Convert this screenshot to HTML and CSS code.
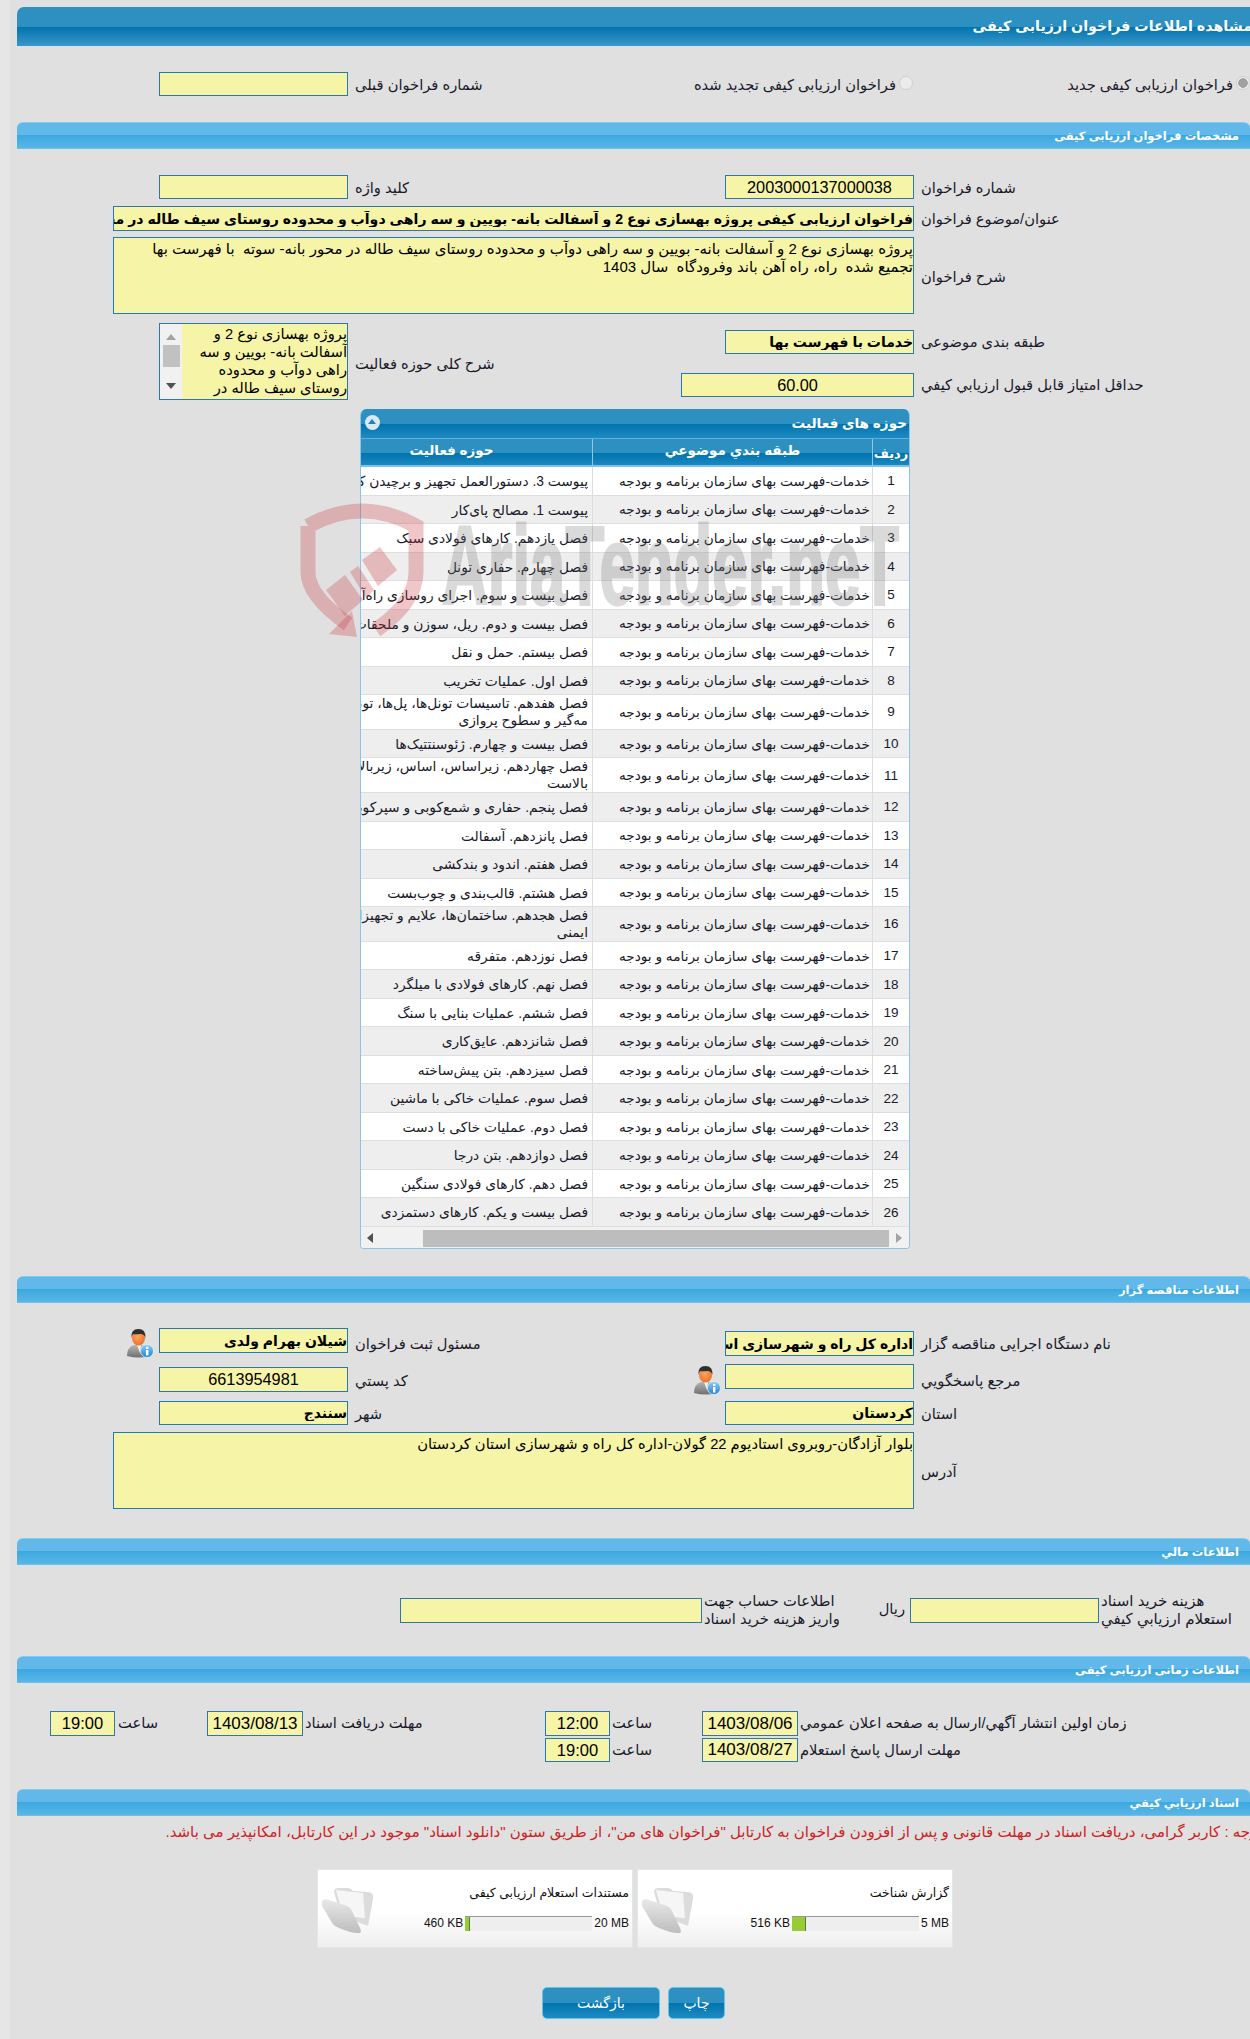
FILE: index.html
```html
<!DOCTYPE html>
<html lang="fa" dir="rtl">
<head>
<meta charset="utf-8">
<title>مشاهده اطلاعات فراخوان ارزیابی کیفی</title>
<link rel="stylesheet" href="styles.css">
</head>
<body>
<svg class="defs" width="0" height="0" aria-hidden="true">
  <defs>
    <linearGradient id="suit" x1="0" y1="0" x2="0" y2="1"><stop offset="0" stop-color="#b5b5b5"/><stop offset="1" stop-color="#6f6f6f"/></linearGradient>
    <radialGradient id="face" cx=".45" cy=".4" r=".7"><stop offset="0" stop-color="#ffa564"/><stop offset="1" stop-color="#e9691f"/></radialGradient>
    <linearGradient id="info" x1="0" y1="0" x2="0" y2="1"><stop offset="0" stop-color="#8fd0f5"/><stop offset="1" stop-color="#1f80cf"/></linearGradient>
    <linearGradient id="fold" x1="0" y1="0" x2="0" y2="1"><stop offset="0" stop-color="#e8e8e8"/><stop offset="1" stop-color="#bdbdbd"/></linearGradient>
    <symbol id="person" viewBox="0 0 28 30">
      <path d="M1 28 Q1 19 8 17 L18 17 Q24 19 24 28 Q13 31 1 28Z" fill="url(#suit)"/>
      <path d="M11 17 L15 17 L14 25Z" fill="#f2f2f2"/>
      <ellipse cx="12.500" cy="10" rx="6.500" ry="7.500" fill="url(#face)"/>
      <path d="M5.500 10 Q4.500 1 12.500 1 Q20 1 19.500 10 Q18 5.500 14 6 Q9 6.500 7 6 Q6 8 5.500 10Z" fill="#2f2f2f"/>
      <circle cx="21" cy="23" r="6.500" fill="url(#info)" stroke="#dff1fb" stroke-width=".8"/>
      <rect x="20" y="22" width="2.400" height="5.500" fill="#fff"/>
      <rect x="20" y="18.800" width="2.400" height="2.200" fill="#fff"/>
    </symbol>
    <symbol id="folder" viewBox="0 0 54 48">
      <path d="M13 6 Q13 2 18 2 L27 2 Q30 2 32 5 L47 6 Q53 6 52 13 L47 40 L20 30Z" fill="#dcdcdc"/>
      <path d="M15 4 L42 7 L44 32 L22 30Z" fill="#f6f6f6"/>
      <path d="M1 15 Q3 12 8 14 L26 20 Q29 21 31 25 L39 42 Q42 48 36 47 Q30 47 18 42 Q12 40 10 35 L1 20Z" fill="url(#fold)"/>
    </symbol>
  </defs>
</svg>

<div class="page">
  <h1 class="main-bar">مشاهده اطلاعات فراخوان ارزیابی کیفی</h1>

  <div class="form row-radio">
    <label class="radio-label first-radio"><input type="radio" name="kind" checked disabled><span>فراخوان ارزیابی کیفی جدید</span></label>
    <label class="radio-label second-radio"><input type="radio" name="kind" disabled><span>فراخوان ارزیابی کیفی تجدید شده</span></label>
    <span class="lbl col3">شماره فراخوان قبلی</span>
    <input class="fld col4" readonly value="">
  </div>

  <h2 class="sub-bar sec-spec">مشخصات فراخوان ارزیابی کیفی</h2>

  <div class="form row-a">
    <span class="lbl">شماره فراخوان</span>
    <input class="fld col2 center" readonly value="2003000137000038">
    <span class="lbl col3">کلید واژه</span>
    <input class="fld col4" readonly value="">
  </div>
  <div class="form row-b">
    <span class="lbl">عنوان/موضوع فراخوان</span>
    <input class="fld wide strong" readonly value="فراخوان ارزیابی کیفی پروژه بهسازی نوع 2 و آسفالت بانه- بویین و سه راهی دوآب و محدوده روستای سیف طاله در محور بانه- سوته">
  </div>
  <div class="form row-c">
    <span class="lbl lbl-mid">شرح فراخوان</span>
    <textarea class="fld wide area" readonly>پروژه بهسازی نوع 2 و آسفالت بانه- بویین و سه راهی دوآب و محدوده روستای سیف طاله در محور بانه- سوته  با فهرست بها
تجمیع شده  راه، راه آهن باند وفرودگاه  سال 1403</textarea>
  </div>
  <div class="form row-d">
    <span class="lbl lbl-cat">طبقه بندی موضوعی</span>
    <input class="fld col2 cat strong" readonly value="خدمات با فهرست بها">
    <span class="lbl col3 lbl-list">شرح کلی حوزه فعالیت</span>
    <div class="listbox">
      <div class="list-text">پروژه بهسازی نوع 2 و<br>آسفالت بانه- بویین و سه<br>راهی دوآب و محدوده<br>روستای سیف طاله در</div>
      <div class="vscroll"><i class="arr up"></i><i class="vthumb"></i><i class="arr down"></i></div>
    </div>
    <span class="lbl lbl-score">حداقل امتياز قابل قبول ارزيابي كيفي</span>
    <input class="fld score center" readonly value="60.00">
  </div>

  <section class="panel">
    <div class="panel-title"><span>حوزه های فعالیت</span><i class="collapse"></i></div>
    <div class="grow ghead"><div class="c-n">رديف</div><div class="c-t">طبقه بندي موضوعي</div><div class="c-a">حوزه فعالیت</div></div>
    <div class="grow"><div class="c-n">1</div><div class="c-t">خدمات-فهرست بهای سازمان برنامه و بودجه</div><div class="c-a">پیوست 3. دستورالعمل تجهیز و برچیدن کارگاه</div></div>
    <div class="grow alt"><div class="c-n">2</div><div class="c-t">خدمات-فهرست بهای سازمان برنامه و بودجه</div><div class="c-a">پیوست 1. مصالح پای‌کار</div></div>
    <div class="grow"><div class="c-n">3</div><div class="c-t">خدمات-فهرست بهای سازمان برنامه و بودجه</div><div class="c-a">فصل یازدهم. کارهای فولادی سبک</div></div>
    <div class="grow alt"><div class="c-n">4</div><div class="c-t">خدمات-فهرست بهای سازمان برنامه و بودجه</div><div class="c-a">فصل چهارم. حفاری تونل</div></div>
    <div class="grow"><div class="c-n">5</div><div class="c-t">خدمات-فهرست بهای سازمان برنامه و بودجه</div><div class="c-a">فصل بیست و سوم. اجرای روسازی راه‌آهن</div></div>
    <div class="grow alt"><div class="c-n">6</div><div class="c-t">خدمات-فهرست بهای سازمان برنامه و بودجه</div><div class="c-a">فصل بیست و دوم. ریل، سوزن و ملحقات</div></div>
    <div class="grow"><div class="c-n">7</div><div class="c-t">خدمات-فهرست بهای سازمان برنامه و بودجه</div><div class="c-a">فصل بیستم. حمل و نقل</div></div>
    <div class="grow alt"><div class="c-n">8</div><div class="c-t">خدمات-فهرست بهای سازمان برنامه و بودجه</div><div class="c-a">فصل اول. عملیات تخریب</div></div>
    <div class="grow tall"><div class="c-n">9</div><div class="c-t">خدمات-فهرست بهای سازمان برنامه و بودجه</div><div class="c-a">فصل هفدهم. تاسیسات تونل‌ها، پل‌ها، تونل<br>مه‌گیر و سطوح پروازی</div></div>
    <div class="grow alt"><div class="c-n">10</div><div class="c-t">خدمات-فهرست بهای سازمان برنامه و بودجه</div><div class="c-a">فصل بیست و چهارم. ژئوسنتتیک‌ها</div></div>
    <div class="grow tall"><div class="c-n">11</div><div class="c-t">خدمات-فهرست بهای سازمان برنامه و بودجه</div><div class="c-a">فصل چهاردهم. زیراساس، اساس، زیربالاست<br>بالاست</div></div>
    <div class="grow alt"><div class="c-n">12</div><div class="c-t">خدمات-فهرست بهای سازمان برنامه و بودجه</div><div class="c-a">فصل پنجم. حفاری و شمع‌کوبی و سپرکوبی</div></div>
    <div class="grow"><div class="c-n">13</div><div class="c-t">خدمات-فهرست بهای سازمان برنامه و بودجه</div><div class="c-a">فصل پانزدهم. آسفالت</div></div>
    <div class="grow alt"><div class="c-n">14</div><div class="c-t">خدمات-فهرست بهای سازمان برنامه و بودجه</div><div class="c-a">فصل هفتم. اندود و بندکشی</div></div>
    <div class="grow"><div class="c-n">15</div><div class="c-t">خدمات-فهرست بهای سازمان برنامه و بودجه</div><div class="c-a">فصل هشتم. قالب‌بندی و چوب‌بست</div></div>
    <div class="grow alt tall"><div class="c-n">16</div><div class="c-t">خدمات-فهرست بهای سازمان برنامه و بودجه</div><div class="c-a">فصل هجدهم. ساختمان‌ها، علایم و تجهیزات<br>ایمنی</div></div>
    <div class="grow"><div class="c-n">17</div><div class="c-t">خدمات-فهرست بهای سازمان برنامه و بودجه</div><div class="c-a">فصل نوزدهم. متفرقه</div></div>
    <div class="grow alt"><div class="c-n">18</div><div class="c-t">خدمات-فهرست بهای سازمان برنامه و بودجه</div><div class="c-a">فصل نهم. کارهای فولادی با میلگرد</div></div>
    <div class="grow"><div class="c-n">19</div><div class="c-t">خدمات-فهرست بهای سازمان برنامه و بودجه</div><div class="c-a">فصل ششم. عملیات بنایی با سنگ</div></div>
    <div class="grow alt"><div class="c-n">20</div><div class="c-t">خدمات-فهرست بهای سازمان برنامه و بودجه</div><div class="c-a">فصل شانزدهم. عایق‌کاری</div></div>
    <div class="grow"><div class="c-n">21</div><div class="c-t">خدمات-فهرست بهای سازمان برنامه و بودجه</div><div class="c-a">فصل سیزدهم. بتن پیش‌ساخته</div></div>
    <div class="grow alt"><div class="c-n">22</div><div class="c-t">خدمات-فهرست بهای سازمان برنامه و بودجه</div><div class="c-a">فصل سوم. عملیات خاکی با ماشین</div></div>
    <div class="grow"><div class="c-n">23</div><div class="c-t">خدمات-فهرست بهای سازمان برنامه و بودجه</div><div class="c-a">فصل دوم. عملیات خاکی با دست</div></div>
    <div class="grow alt"><div class="c-n">24</div><div class="c-t">خدمات-فهرست بهای سازمان برنامه و بودجه</div><div class="c-a">فصل دوازدهم. بتن درجا</div></div>
    <div class="grow"><div class="c-n">25</div><div class="c-t">خدمات-فهرست بهای سازمان برنامه و بودجه</div><div class="c-a">فصل دهم. کارهای فولادی سنگین</div></div>
    <div class="grow alt"><div class="c-n">26</div><div class="c-t">خدمات-فهرست بهای سازمان برنامه و بودجه</div><div class="c-a">فصل بیست و یکم. کارهای دستمزدی</div></div>
    <div class="hscroll"><i class="harr right"></i><i class="hthumb"></i><i class="harr left"></i></div>
  </section>

  <h2 class="sub-bar sec-org">اطلاعات مناقصه گزار</h2>

  <div class="form row-o1">
    <span class="lbl">نام دستگاه اجرایی مناقصه گزار</span>
    <input class="fld col2 tallf strong o1r" readonly value="اداره کل راه و شهرسازی استان کردستان">
    <span class="lbl col3">مسئول ثبت فراخوان</span>
    <input class="fld col4 tallf strong" readonly value="شیلان بهرام ولدی">
    <svg class="person col5"><use href="#person"/></svg>
  </div>
  <div class="form row-o2">
    <span class="lbl">مرجع پاسخگویي</span>
    <div class="with-icon">
      <input class="fld tallf" readonly value="">
      <svg class="person"><use href="#person"/></svg>
    </div>
    <span class="lbl col3">کد پستي</span>
    <input class="fld col4 tallf center o2l" readonly value="6613954981">
  </div>
  <div class="form row-o3">
    <span class="lbl">استان</span>
    <input class="fld col2 strong" readonly value="کردستان">
    <span class="lbl col3">شهر</span>
    <input class="fld col4 strong" readonly value="سنندج">
  </div>
  <div class="form row-o4">
    <span class="lbl lbl-mid">آدرس</span>
    <textarea class="fld wide area area-addr" readonly>بلوار آزادگان-روبروی استادیوم 22 گولان-اداره کل راه و شهرسازی استان کردستان</textarea>
  </div>

  <h2 class="sub-bar sec-fin">اطلاعات مالي</h2>

  <div class="fin-row">
    <span class="lbl2 fin-l1">هزینه خرید اسناد<br>استعلام ارزيابي كيفي</span>
    <input class="fld fin-in1" readonly value="">
    <span class="rial">ریال</span>
    <span class="lbl2 fin-l2">اطلاعات حساب جهت<br>واریز هزینه خرید اسناد</span>
    <input class="fld fin-in2" readonly value="">
  </div>

  <h2 class="sub-bar sec-time">اطلاعات زمانی ارزیابی کیفی</h2>

  <div class="time-row t1">
    <span class="t-lbl w-first">زمان اولین انتشار آگهي/ارسال به صفحه اعلان عمومي</span>
    <input class="fld date" readonly value="1403/08/06">
    <span class="t-lbl w-hour">ساعت</span>
    <input class="fld time" readonly value="12:00">
    <span class="t-lbl w-doc">مهلت دریافت اسناد</span>
    <input class="fld date" readonly value="1403/08/13">
    <span class="t-lbl w-hour2">ساعت</span>
    <input class="fld time" readonly value="19:00">
  </div>
  <div class="time-row t2">
    <span class="t-lbl w-first">مهلت ارسال پاسخ استعلام</span>
    <input class="fld date" readonly value="1403/08/27">
    <span class="t-lbl w-hour">ساعت</span>
    <input class="fld time" readonly value="19:00">
  </div>

  <h2 class="sub-bar sec-doc">اسناد ارزيابي كيفي</h2>

  <p class="note">توجه : کاربر گرامی، دریافت اسناد در مهلت قانونی و پس از افزودن فراخوان به کارتابل "فراخوان های من"، از طریق ستون "دانلود اسناد" موجود در این کارتابل، امکانپذیر می باشد.</p>

  <div class="cards">
    <article class="card">
      <div class="card-body">
        <div class="card-title">گزارش شناخت</div>
        <div class="meter"><span>5 MB</span><div class="track"><div class="fill" style="width:14px"></div></div><span>516 KB</span></div>
      </div>
      <svg class="folder"><use href="#folder"/></svg>
    </article>
    <article class="card">
      <div class="card-body">
        <div class="card-title">مستندات استعلام ارزیابی کیفی</div>
        <div class="meter"><span>20 MB</span><div class="track"><div class="fill" style="width:5px"></div></div><span>460 KB</span></div>
      </div>
      <svg class="folder"><use href="#folder"/></svg>
    </article>
  </div>

  <div class="actions">
    <button class="btn btn-print" type="button">چاپ</button>
    <button class="btn btn-back" type="button">بازگشت</button>
  </div>

  <svg class="watermark" viewBox="0 0 600 140" width="600" height="140" aria-hidden="true">
    <g class="wm-shield">
      <path d="M8 26 Q62 -4 116 26 V72 Q116 102 76 130 M8 26 V72 Q8 96 48 124" />
    </g>
    <polygon class="wm-red" points="52,111 57,137 29,134"/>
    <polygon class="wm-red" points="26,90 45,75 63,100 45,116"/>
    <polygon class="wm-red" points="50,72 58,66 74,90 66,98"/>
    <polygon class="wm-red" points="62,60 80,47 97,70 78,86"/>
    <text class="wm-text" x="142" y="104" textLength="457" lengthAdjust="spacingAndGlyphs">AriaTender.neT</text>
  </svg>
</div>
</body>
</html>
```

FILE: styles.css
```css
* { box-sizing: border-box; }
html, body { margin: 0; padding: 0; }
body {
  width: 1250px;
  height: 2039px;
  overflow: hidden;
  background: #e0e0e0;
  color: #1a1a2a;
  font-family: "Liberation Sans", "DejaVu Sans", sans-serif;
  font-size: 14.700px;
  direction: rtl;
}
.defs { position: absolute; }
.page {
  position: relative;
  width: 1250px;
  height: 2039px;
  padding: 7px 0 0 17px;
  overflow: hidden;
  background: linear-gradient(90deg, #e6e6e6 10px, #e0e0e0 10px);
}
h1, h2, p { margin: 0; }

.main-bar {
  height: 39px;
  line-height: 39px;
  text-indent: -2px;
  border-top-left-radius: 7px;
  background: linear-gradient(#2e90c0 0, #2e90c0 20px, #0073ae 20px, #3a97c9 39px);
  color: #fff;
  font-size: 14.250px;
  font-weight: bold;
  white-space: nowrap;
}
.sub-bar {
  height: 27px;
  line-height: 27px;
  padding-right: 11px;
  border-top: 1px solid #7bcdf5;
  border-bottom: 1px solid #6cc0ee;
  border-top-left-radius: 6px;
  border-top-right-radius: 6px;
  background: linear-gradient(#62b9e9 0, #62b9e9 12px, #3aa8e0 12px, #5ab6e6 25px);
  color: #fff;
  font-size: 11.500px;
  font-weight: bold;
}
.sec-org { margin-top: 27px; }
.sec-fin { margin-top: 29px; }
.sec-time { margin-top: 25px; }
.sec-doc { margin-top: 26px; }

.form {
  display: grid;
  grid-template-columns: 329px 196px 370px 196px 142px;
  align-items: start;
}
.lbl {
  text-align: left;
  white-space: nowrap;
  line-height: 24px;
  padding-top: 1px;
}
.lbl2 { line-height: 18px; white-space: nowrap; }
.col2 { grid-column: 2; }
.col3 { grid-column: 3; }
.col4 { grid-column: 4; }
.col5 { grid-column: 5; }

.fld {
  display: block;
  width: 189px;
  height: 24px;
  margin: 0 7px 0 0;
  padding: 0;
  border: 1px solid #2b78ae;
  border-radius: 0;
  outline: none;
  background: #f6f4a6;
  color: #000;
  font-family: "Liberation Sans", "DejaVu Sans", sans-serif;
  font-size: 16.300px;
  direction: rtl;
}
.center { text-align: center; }
.strong { font-size: 14px; font-weight: bold; }
.row-b .strong { font-size: 14.100px; }
.tallf { height: 25px; }
.wide { grid-column: 2 / -1; width: 801px; }
.area {
  height: 77px;
  resize: none;
  overflow: hidden;
  white-space: pre;
  font-size: 15px;
  line-height: 18px;
  padding-top: 2px;
}
.area-addr { font-size: 14.700px; }

.row-radio { height: 76px; padding-top: 26px; }
.radio-label { display: flex; align-items: center; gap: 3px; white-space: nowrap; height: 24px; }
.radio-label input { appearance: none; -webkit-appearance: none; flex: none; width: 14px; height: 14px; margin: -2px 0 0 0; border: 1px solid #cfcfcf; border-radius: 50%; background: #ececec; }
.radio-label input:checked { background: radial-gradient(circle, #a0a0a0 0 4.500px, #ececec 5px); }
.first-radio { grid-column: 1; }
.second-radio { grid-column: 2; margin-right: 8px; }

.row-a { margin-top: 26px; }
.row-b { margin-top: 6px; }
.row-b .fld { height: 25px; }
.row-c { margin-top: 6px; }
.lbl-mid { padding-top: 28px; }
.row-d {
  margin-top: 9px;
  height: 77px;
  grid-template-rows: 50px 27px;
}
.lbl-cat { grid-row: 1; grid-column: 1; padding-top: 7px; }
.cat { grid-row: 1; margin-top: 7px; }
.lbl-list { grid-row: 1 / span 2; padding-top: 29px; }
.listbox {
  grid-column: 4;
  grid-row: 1 / span 2;
  display: flex;
  width: 189px;
  height: 77px;
  margin-right: 7px;
  border: 1px solid #2b78ae;
  background: #f6f4a6;
  color: #000;
}
.list-text { flex: 1; padding-top: 1px; font-size: 14.700px; line-height: 18px; white-space: nowrap; overflow: hidden; }
.vscroll { display: flex; flex-direction: column; align-items: center; flex: none; width: 22px; background: #f1f1f1; }
.vthumb { display: block; width: 17px; height: 22px; margin-top: 5px; background: #c1c1c1; }
.arr { display: block; width: 0; height: 0; border-left: 5px solid transparent; border-right: 5px solid transparent; }
.arr.up { margin-top: 10px; border-bottom: 6px solid #a3a3a3; }
.arr.down { margin-top: 16px; border-top: 6px solid #505050; }
.lbl-score { grid-row: 2; grid-column: 1; padding-top: 0; }
.score { grid-row: 2; grid-column: 2; width: 233px; justify-self: start; }

.panel {
  width: 550px;
  height: 840px;
  margin: 9px 340px 0 0;
  border: 1px solid #8fc3e6;
  border-top: 0;
  border-radius: 6px 6px 4px 4px;
  background: #fff;
  overflow: hidden;
}
.panel-title {
  display: flex;
  align-items: center;
  justify-content: space-between;
  height: 30px;
  padding: 0 2px 2px 4px;
  background: linear-gradient(#2e90c0 0, #2e90c0 15px, #0073ae 15px, #1f8ac2 29px);
  border-bottom: 1px solid #5fb0de;
  color: #fff;
  font-size: 13.600px;
  font-weight: bold;
}
.collapse { position: relative; display: block; width: 15px; height: 15px; border-radius: 50%; background: #d8e8f4; }
.collapse::after { content: ""; position: absolute; top: 4px; left: 3px; border-left: 4.500px solid transparent; border-right: 4.500px solid transparent; border-bottom: 5px solid #1f80b5; }
.grow {
  display: grid;
  grid-template-columns: 37px 280px 231px;
  height: 28.500px;
  border-bottom: 1px solid #dedede;
  background: #fff;
  font-size: 13.700px;
}
.grow.alt { background: #eee; }
.grow.tall { height: 34.800px; }
.grow > div { display: flex; align-items: center; overflow: hidden; white-space: nowrap; }
.c-n { justify-content: center; border-left: 1px solid #dedede; font-size: 13.500px; }
.c-t { padding-right: 2px; border-left: 1px solid #dedede; }
.grow > .c-a { display: block; padding-right: 4px; padding-top: 6px; font-size: 13.800px; line-height: 17px; }
.grow.tall > .c-a { padding-top: 0; }
.grow.ghead {
  height: 28px;
  border-bottom: 2px solid #7cc3ea;
  background: linear-gradient(#2e90c0 0, #2e90c0 14px, #0073ae 14px, #1b87bf 26px);
  color: #fff;
  font-size: 13.500px;
  font-weight: bold;
}
.ghead > div { justify-content: center; border-left: 1px solid #8cc8e8; padding: 0 0 4px; }
.grow.ghead > .c-a { display: flex; padding: 0 50px 4px 0; border-left: 0; font-size: 13.500px; }
.ghead > .c-n { padding: 2px 0 0; font-size: 13px; }
.hscroll { display: flex; align-items: center; height: 23px; padding-right: 7px; background: #f1f1f1; }
.hthumb { display: block; height: 17px; width: 466px; margin-right: 7px; background: #bdbdbd; }
.harr { display: block; flex: none; width: 0; height: 0; border-top: 5px solid transparent; border-bottom: 5px solid transparent; }
.harr.right { border-left: 6px solid #a3a3a3; }
.harr.left { border-right: 6px solid #505050; margin-right: 50px; }

.row-o1 { margin-top: 25px; }
.o1r { margin-top: 3px; }
.row-o1 .lbl { padding-top: 4px; }
.person { display: block; width: 28px; height: 30px; }
.row-o1 .col5 { margin-right: 5px; }
.row-o2 { margin-top: 6px; height: 37px; }
.row-o2 .lbl { padding-top: 5px; }
.with-icon { grid-column: 2; display: flex; align-items: flex-start; gap: 5px; }
.with-icon .fld { flex: none; }
.with-icon .person { flex: none; margin: 1px -1px 0 0; }
.o2l { margin-top: 3px; }
.row-o4 { margin-top: 6px; }

.fin-row { display: flex; align-items: flex-start; height: 33px; margin-top: 33px; }
.fin-row .fld { flex: none; margin: 0; height: 25px; }
.fin-l1 { flex: none; width: 151px; margin-top: -6px; padding-left: 2px; text-align: left; font-size: 15px; }
.fin-in1 { width: 189px; }
.rial { flex: none; width: 29px; padding: 2px 5px 0 0; }
.fin-l2 { flex: none; width: 179px; margin-top: -6px; padding-left: 2px; text-align: left; }
.fin-row .fin-in2 { width: 302px; }

.time-row { display: flex; align-items: flex-start; height: 25px; }
.t1 { margin-top: 28px; }
.t2 { margin-top: 2px; }
.time-row .fld { flex: none; margin: 0; height: 25px; text-align: center; }
.time-row.t2 .fld { height: 24px; }
.time-row .date { width: 96px; font-size: 17px; }
.time-row .time { width: 65px; font-size: 16.500px; }
.t-lbl { flex: none; padding: 3px 0 0 2px; white-space: nowrap; text-align: left; }
.w-first { width: 452px; }
.w-hour { width: 92px; }
.w-doc { width: 242px; }
.w-hour2 { width: 92px; padding-left: 3px; }

.note {
  margin: 7px -12px 0 0;
  color: #cf2222;
  font-size: 15px;
  line-height: 18px;
  white-space: nowrap;
}
.cards { display: flex; gap: 4px; margin: 28px 297px 0 0; }
.card {
  display: flex;
  justify-content: space-between;
  flex: none;
  width: 316px;
  height: 79px;
  padding: 0 3px;
  border: 1px solid #e6e6e6;
  background: linear-gradient(#fff 0, #fff 55%, #eee 100%);
}
.card-body { flex: 1; }
.card-title { margin-top: 13px; font-size: 12.500px; line-height: 20px; color: #111; white-space: nowrap; }
.meter { display: flex; align-items: center; gap: 2px; margin-top: 13px; font-size: 12px; line-height: 15px; color: #111; }
.meter span { direction: ltr; unicode-bidi: isolate; white-space: nowrap; }
.track { flex: none; width: 127px; height: 15px; border-top: 1px solid #999; background: #eee; }
.fill { height: 14px; margin-right: auto; background: #9c3; border-right: 1px solid #575; }
.folder { flex: none; width: 54px; height: 48px; margin-top: 16px; }

.actions { display: flex; gap: 8px; margin: 39px 525px 0 0; }
.btn {
  flex: none;
  height: 32px;
  padding: 0;
  border: 1px solid #62c4ea;
  border-radius: 5px;
  background: linear-gradient(#2e90c0 0, #2e90c0 15px, #0073ae 15px, #1f8ac2 30px);
  color: #fff;
  font-family: "Liberation Sans", "DejaVu Sans", sans-serif;
  font-size: 14px;
}
.btn-print { width: 57px; }
.btn-back { width: 118px; }

.watermark { position: absolute; left: 300px; top: 500px; pointer-events: none; }
.wm-shield path { fill: none; stroke: rgba(200, 50, 60, .28); stroke-width: 15; }
.wm-red { fill: rgba(200, 50, 60, .28); }
.wm-text {
  fill: #787878;
  stroke: #787878;
  stroke-width: 3px;
  opacity: .27;
  font-family: "Liberation Sans", sans-serif;
  font-weight: bold;
  font-size: 112px;
  direction: ltr;
  unicode-bidi: bidi-override;
}
```
